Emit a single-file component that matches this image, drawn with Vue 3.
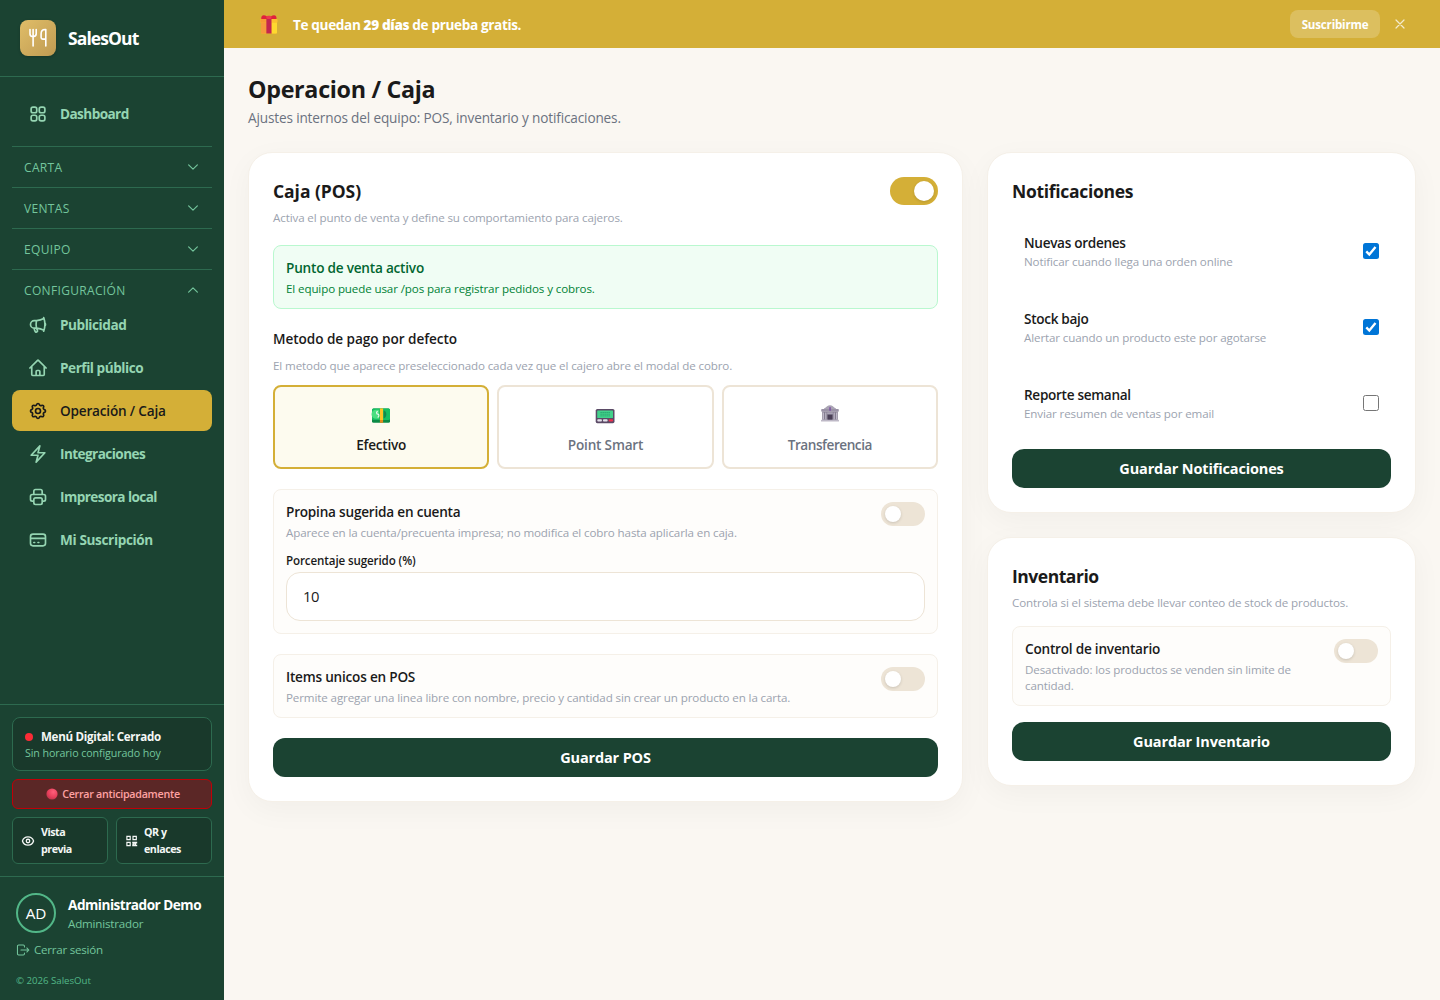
<script setup>
import { ref } from 'vue'

const groups = ['CARTA', 'VENTAS', 'EQUIPO']

const icons = {
  megaphone: 'M10.34 15.84c-.688-.06-1.386-.09-2.09-.09H7.5a4.5 4.5 0 1 1 0-9h.75c.704 0 1.402-.03 2.09-.09m0 9.18c.253.962.584 1.892.985 2.783.247.55.06 1.21-.463 1.511l-.657.38c-.551.318-1.26.117-1.527-.461a20.845 20.845 0 0 1-1.44-4.282m3.102.069a18.03 18.03 0 0 1-.59-4.59c0-1.586.205-3.124.59-4.59m0 9.18a23.848 23.848 0 0 1 8.835 2.535M10.34 6.66a23.847 23.847 0 0 0 8.835-2.535m0 0A23.74 23.74 0 0 0 18.795 3m.38 1.125a23.91 23.91 0 0 1 1.014 5.395m-1.014 8.855c-.118.38-.245.754-.38 1.125m.38-1.125a23.91 23.91 0 0 0 1.014-5.395m0-3.46c.495.413.811 1.035.811 1.73 0 .695-.316 1.317-.811 1.73m0-3.46a24.347 24.347 0 0 1 0 3.46',
  home: 'm2.25 12 8.954-8.955c.44-.439 1.152-.439 1.591 0L21.75 12M4.5 9.75v10.125c0 .621.504 1.125 1.125 1.125H9.75v-4.875c0-.621.504-1.125 1.125-1.125h2.25c.621 0 1.125.504 1.125 1.125V21h4.125c.621 0 1.125-.504 1.125-1.125V9.75M8.25 21h8.25',
  cog: 'M10.325 4.317c.426-1.756 2.924-1.756 3.35 0a1.724 1.724 0 002.573 1.066c1.543-.94 3.31.826 2.37 2.37a1.724 1.724 0 001.065 2.572c1.756.426 1.756 2.924 0 3.35a1.724 1.724 0 00-1.066 2.573c.94 1.543-.826 3.31-2.37 2.37a1.724 1.724 0 00-2.572 1.065c-.426 1.756-2.924 1.756-3.35 0a1.724 1.724 0 00-2.573-1.066c-1.543.94-3.31-.826-2.37-2.37a1.724 1.724 0 00-1.065-2.572c-1.756-.426-1.756-2.924 0-3.35a1.724 1.724 0 001.066-2.573c-.94-1.543.826-3.31 2.37-2.37.996.608 2.296.07 2.572-1.065zM15 12a3 3 0 11-6 0 3 3 0 016 0z',
  bolt: 'm3.75 13.5 10.5-11.25L12 10.5h8.25L9.75 21.75 12 13.5H3.75Z',
  printer: 'M17 17h2a2 2 0 002-2v-4a2 2 0 00-2-2H5a2 2 0 00-2 2v4a2 2 0 002 2h2m2 4h6a2 2 0 002-2v-4a2 2 0 00-2-2H9a2 2 0 00-2 2v4a2 2 0 002 2zm8-12V5a2 2 0 00-2-2H9a2 2 0 00-2 2v4h10z',
  card: 'M3 10h18M7 15h1m4 0h1m-7 4h12a3 3 0 003-3V8a3 3 0 00-3-3H6a3 3 0 00-3 3v8a3 3 0 003 3z',
}

const configItems = [
  { label: 'Publicidad', icon: 'megaphone', fit: 'n2' },
  { label: 'Perfil público', icon: 'home', fit: 'n2' },
  { label: 'Operación / Caja', icon: 'cog', active: true, fit: 'n3' },
  { label: 'Integraciones', icon: 'bolt', fit: 'n1' },
  { label: 'Impresora local', icon: 'printer', fit: 'n1' },
  { label: 'Mi Suscripción', icon: 'card', fit: 'n4' },
]

const method = ref('cash')

const notices = ref([
  { title: 'Nuevas ordenes', text: 'Notificar cuando llega una orden online', on: true },
  { title: 'Stock bajo', text: 'Alertar cuando un producto este por agotarse', on: true },
  { title: 'Reporte semanal', text: 'Enviar resumen de ventas por email', on: false },
])
</script>

<template>
  <div class="app">
    <aside class="side">
      <div class="brand">
        <div class="logo">
          <svg width="20" height="20" viewBox="0 0 20 20" fill="none" stroke="#fff" stroke-width="1.6" stroke-linecap="round" stroke-linejoin="round">
            <path d="M2 1.5v4.2c0 1.600 1 2.600 2.300 2.800h1.400C7 8.300 8.200 7.300 8.200 5.700V1.500M5.100 1.500V18M17.800 18V1.500h-.8c-2.400 0-3.900 1.800-3.900 4.400v3.600c0 1 .6 1.600 1.600 1.600h3.100" />
          </svg>
        </div>
        <span class="brand-name">SalesOut</span>
      </div>

      <nav class="nav">
        <a class="item">
          <svg class="ico" viewBox="0 0 24 24"><path d="M3.750 6A2.250 2.250 0 0 1 6 3.750h2.250A2.250 2.250 0 0 1 10.500 6v2.250a2.250 2.250 0 0 1-2.250 2.250H6a2.250 2.250 0 0 1-2.250-2.250V6ZM3.750 15.750A2.250 2.250 0 0 1 6 13.500h2.250a2.250 2.250 0 0 1 2.250 2.250V18a2.250 2.250 0 0 1-2.250 2.250H6A2.250 2.250 0 0 1 3.750 18v-2.250ZM13.500 6a2.250 2.250 0 0 1 2.250-2.250H18A2.250 2.250 0 0 1 20.250 6v2.250A2.250 2.250 0 0 1 18 10.500h-2.250a2.250 2.250 0 0 1-2.250-2.250V6ZM13.500 15.750a2.250 2.250 0 0 1 2.250-2.250H18a2.250 2.250 0 0 1 2.250 2.250V18A2.250 2.250 0 0 1 18 20.250h-2.250A2.250 2.250 0 0 1 13.500 18v-2.250Z" /></svg>
          <span class="n1">Dashboard</span>
        </a>
        <div class="groups">
          <div v-for="g in groups" :key="g" class="group closed">
            <div class="group-head">
              <span>{{ g }}</span>
              <svg class="chev" viewBox="0 0 24 24"><path d="m19.500 8.250-7.500 7.500-7.500-7.500" /></svg>
            </div>
          </div>
          <div class="group">
            <div class="group-head">
              <span>CONFIGURACIÓN</span>
              <svg class="chev" viewBox="0 0 24 24"><path d="m4.500 15.750 7.500-7.500 7.500 7.500" /></svg>
            </div>
            <div class="items">
              <a v-for="i in configItems" :key="i.label" class="item" :class="{ active: i.active }">
                <svg class="ico" viewBox="0 0 24 24"><path :d="icons[i.icon]" /></svg>
                <span :class="i.fit">{{ i.label }}</span>
              </a>
            </div>
          </div>
        </div>
      </nav>

      <div class="status">
        <div class="state-box">
          <div class="state-title"><i class="dot"></i><span>Menú Digital: Cerrado</span></div>
          <div class="state-sub">Sin horario configurado hoy</div>
        </div>
        <button class="early">
          <svg width="12" height="12" viewBox="0 0 12 12">
            <defs><radialGradient id="ball" cx=".62" cy=".32" r=".75"><stop offset="0" stop-color="#ff5f7a" /><stop offset=".6" stop-color="#e8405c" /><stop offset="1" stop-color="#b8354a" /></radialGradient></defs>
            <circle cx="6" cy="6" r="5.600" fill="url(#ball)" />
          </svg>
          <span>Cerrar anticipadamente</span>
        </button>
        <div class="quick">
          <button class="mini">
            <svg width="14" height="14" viewBox="0 0 24 24" fill="none" stroke="#f4f7f5" stroke-width="2.200" stroke-linecap="round" stroke-linejoin="round"><path d="M15 12a3 3 0 11-6 0 3 3 0 016 0z" /><path d="M2.458 12C3.732 7.943 7.523 5 12 5c4.478 0 8.268 2.943 9.542 7-1.274 4.057-5.064 7-9.542 7-4.477 0-8.268-2.943-9.542-7z" /></svg>
            <span>Vista<br />previa</span>
          </button>
          <button class="mini">
            <svg class="qr" width="12" height="12" viewBox="0 0 12 12" fill="none" stroke="#f4f7f5" stroke-width="1.200"><path d="M.9 1.300h3.300v3.300H.9zM7 1.300h3.300v3.300H7zM.9 7.300h3.300v3.300H.9z" /><path d="M6.200 7.300h2.600v1.900H6.200M9.500 6.800v4.400M10.600 6.800v1.800M6.200 10.600h2.800M10.600 9.800v1.500M7.300 7v4" /></svg>
            <span>QR y<br />enlaces</span>
          </button>
        </div>
      </div>

      <div class="account">
        <div class="who">
          <div class="avatar">AD</div>
          <div>
            <div class="who-name">Administrador Demo</div>
            <div class="who-role">Administrador</div>
          </div>
        </div>
        <div class="logout">
          <svg width="14" height="14" viewBox="0 0 24 24" fill="none" stroke="#74c69d" stroke-width="1.800" stroke-linecap="round" stroke-linejoin="round"><path d="M18.500 15.500l3.500-3.500m0 0l-3.500-3.500M22 12H8.500m6 5v1.500a2 2 0 01-2 2H4.500a2 2 0 01-2-2v-13a2 2 0 012-2h8a2 2 0 012 2V7" /></svg>
          <span>Cerrar sesión</span>
        </div>
        <div class="copy">© 2026 SalesOut</div>
      </div>
    </aside>

    <div class="page">
      <header class="banner">
        <svg class="gift" width="20" height="20" viewBox="0 0 20 20">
          <rect x="2" y="7.500" width="16" height="12" rx="1" fill="#fdbb2c" />
          <rect x="12.500" y="7.500" width="5.500" height="12" rx="1" fill="#ffd92f" />
          <rect x="2" y="7.500" width="5" height="12" rx="1" fill="#f59a3c" />
          <rect x="1.300" y="5" width="17.200" height="3.700" rx="1" fill="#fcc02e" />
          <rect x="1.300" y="5" width="6" height="3.700" rx="1" fill="#f49a34" />
          <path d="M2.300 4.900C2 3 3 1.300 4.800 1.300c2 0 3.800 1.200 5.100 3.600ZM17.500 4.900c.3-1.900-.7-3.600-2.500-3.600-2 0-3.800 1.200-5.100 3.600Z" fill="#e0213c" />
          <rect x="7.300" y="3.400" width="5.200" height="16.100" fill="#c3264f" />
          <rect x="7.300" y="1.800" width="5.200" height="3.200" rx="1.500" fill="#ee3a4c" />
        </svg>
        <div class="banner-text">Te quedan <b>29 días</b> de prueba gratis.</div>
        <button class="subscribe">Suscribirme</button>
        <svg class="close" width="16" height="16" viewBox="0 0 24 24" fill="none" stroke="#fff" stroke-opacity=".75" stroke-width="1.800" stroke-linecap="round"><path d="M6 6l12 12M18 6L6 18" /></svg>
      </header>

      <main class="main">
        <h1>Operacion / Caja</h1>
        <p class="lead">Ajustes internos del equipo: POS, inventario y notificaciones.</p>

        <div class="grid">
          <section class="card">
            <div class="head">
              <div>
                <h2 class="h-caja">Caja (POS)</h2>
                <p class="hint mt4">Activa el punto de venta y define su comportamiento para cajeros.</p>
              </div>
              <span class="toggle big on"><i></i></span>
            </div>

            <div class="alert">
              <div class="t14">Punto de venta activo</div>
              <p class="hint mt2 green">El equipo puede usar /pos para registrar pedidos y cobros.</p>
            </div>

            <div class="field-title">Metodo de pago por defecto</div>
            <p class="hint mt8">El metodo que aparece preseleccionado cada vez que el cajero abre el modal de cobro.</p>
            <div class="methods">
              <button class="method" :class="{ picked: method === 'cash' }" @click="method = 'cash'">
                <svg width="20" height="20" viewBox="0 -1 20 20">
                  <rect x="1" y="3.400" width="18" height="14.400" rx="1.500" fill="#0b8a45" />
                  <rect x="1" y="3.400" width="18" height="11.600" rx="1.500" fill="#14bf62" />
                  <path d="M5 4.800h3v9H5a4.500 4.500 0 0 1 0-9Z" fill="#4ade80" />
                  <path d="M6.800 6.300c-1.600 0-1.600 2.800 0 2.900s1.500 2.900-.2 2.900" stroke="#e9f7ee" stroke-width="1.200" fill="none" />
                  <path d="M12.500 5.500c3.800 0 3.800 7.800 0 7.800Z" fill="#158a4c" />
                  <rect x="8.900" y="3.400" width="3.200" height="11.600" fill="#fdc526" />
                  <rect x="8.900" y="15" width="3.200" height="2.800" fill="#e48a1e" />
                </svg>
                <span class="m1">Efectivo</span>
              </button>
              <button class="method" :class="{ picked: method === 'point' }" @click="method = 'point'">
                <svg width="20" height="20" viewBox="0 -1 20 20">
                  <rect x=".7" y="4" width="18.800" height="14.200" rx="1.600" fill="#5b4a66" />
                  <rect x="2.200" y="5.400" width="15.800" height="7.600" rx=".6" fill="#43d18b" />
                  <path d="M5.500 7.500h9.500M5.500 9.200h9.500M5.500 10.900h9.500" stroke="#1f9a66" stroke-width=".9" stroke-dasharray="1.200 .8" />
                  <rect x="2.300" y="14.300" width="4.600" height="2.300" rx=".8" fill="#e4dfe9" />
                  <rect x="8" y="14.300" width="4.600" height="2.300" rx=".8" fill="#e4dfe9" />
                  <rect x="13.700" y="14.300" width="4.300" height="2.300" rx=".8" fill="#f0304f" />
                </svg>
                <span>Point Smart</span>
              </button>
              <button class="method" :class="{ picked: method === 'bank' }" @click="method = 'bank'">
                <svg width="20" height="20" viewBox="0 0 20 20">
                  <path d="M4 4.600C6.500 3 7.800 1.200 10 1.200S13.500 3 16 4.600V6H4Z" fill="#aaa4b4" />
                  <rect x="1.200" y="5" width="17.600" height="2.800" rx=".8" fill="#9a93a6" />
                  <rect x="2.200" y="7.700" width="15.600" height="8.200" fill="#857e90" />
                  <path d="M3.400 8.500v7M5.800 8.500v7M14.200 8.500v7M16.600 8.500v7" stroke="#beb8c8" stroke-width="1.200" />
                  <rect x="7.600" y="10.700" width="4.800" height="5.200" fill="#4a3f56" />
                  <rect x="7.200" y="8.300" width="5.600" height="1.800" fill="#aaa3b5" />
                  <rect x="9.300" y="3" width="1.500" height="4" rx=".7" fill="#7b4fa3" />
                  <rect x="1" y="15.700" width="18" height="1.900" rx=".5" fill="#bdb8c6" />
                </svg>
                <span class="m3">Transferencia</span>
              </button>
            </div>

            <div class="option">
              <div class="option-row">
                <div>
                  <div class="t14">Propina sugerida en cuenta</div>
                  <p class="hint mt2">Aparece en la cuenta/precuenta impresa; no modifica el cobro hasta aplicarla en caja.</p>
                </div>
                <span class="toggle"><i></i></span>
              </div>
              <label class="label">Porcentaje sugerido (%)</label>
              <div class="input">10</div>
            </div>

            <div class="option">
              <div class="option-row">
                <div>
                  <div class="t14">Items unicos en POS</div>
                  <p class="hint mt2">Permite agregar una linea libre con nombre, precio y cantidad sin crear un producto en la carta.</p>
                </div>
                <span class="toggle"><i></i></span>
              </div>
            </div>

            <button class="save mt20">Guardar POS</button>
          </section>

          <div class="column">
            <section class="card">
              <h2 class="h-noti">Notificaciones</h2>
              <div class="notices">
                <label v-for="n in notices" :key="n.title" class="notice" @click="n.on = !n.on">
                  <div>
                    <div class="t14 tight">{{ n.title }}</div>
                    <p class="hint">{{ n.text }}</p>
                  </div>
                  <span class="check" :class="{ checked: n.on }">
                    <svg v-if="n.on" width="16" height="16" viewBox="0 0 16 16"><path d="M3.300 8.400 6.300 11.600 12.500 4" fill="none" stroke="#fff" stroke-width="2.300" /></svg>
                  </span>
                </label>
              </div>
              <button class="save">Guardar Notificaciones</button>
            </section>

            <section class="card">
              <h2 class="h-inv">Inventario</h2>
              <p class="hint mt4">Controla si el sistema debe llevar conteo de stock de productos.</p>
              <div class="option mt16">
                <div class="option-row">
                  <div>
                    <div class="t14">Control de inventario</div>
                    <p class="hint mt2">Desactivado: los productos se venden sin limite de cantidad.</p>
                  </div>
                  <span class="toggle"><i></i></span>
                </div>
              </div>
              <button class="save mt16">Guardar Inventario</button>
            </section>
          </div>
        </div>
      </main>
    </div>
  </div>
</template>

<style>
body {
  background: #faf7f2;
}
</style>

<style scoped>
* {
  box-sizing: border-box;
}
.app {
  display: flex;
  height: 1000px;
  overflow: hidden;
  font-family: 'Open Sans', 'Noto Sans', sans-serif;
  letter-spacing: -0.012em;
  color: #1a1a1a;
}
button {
  font: inherit;
  letter-spacing: inherit;
  border: 0;
  margin: 0;
  padding: 0;
}
h1, h2, p {
  margin: 0;
}

/* Sidebar */
.side {
  width: 224px;
  flex: none;
  display: flex;
  flex-direction: column;
  background: #1b4332;
  color: #95d5b2;
}
.brand {
  display: flex;
  align-items: center;
  gap: 12px;
  height: 77px;
  padding: 0 20px;
  border-bottom: 1px solid #2d6a4f;
}
.logo {
  display: flex;
  align-items: center;
  justify-content: center;
  width: 36px;
  height: 36px;
  border-radius: 8px;
  background: linear-gradient(135deg, #e0bd68, #bf9b52);
  box-shadow: 0 1px 3px rgba(0, 0, 0, 0.2);
}
.brand-name {
  color: #fff;
  font-size: 17.5px;
  font-weight: 700;
  letter-spacing: -0.052em;
}
.nav {
  flex: 1;
  padding: 16px 12px 0;
}
.item {
  display: flex;
  align-items: center;
  gap: 12px;
  height: 41px;
  padding: 0 16px;
  border-radius: 8px;
  font-size: 13.6px;
  font-weight: 700;
}
.item.active {
  background: #d4af37;
  color: #1a1a1a;
  font-weight: 600;
}
.n1 { letter-spacing: -0.043em; }
.n2 { letter-spacing: -0.034em; }
.n3 { letter-spacing: -0.014em; }
.n4 { letter-spacing: -0.027em; }
.ico {
  width: 20px;
  height: 20px;
  fill: none;
  stroke: currentColor;
  stroke-width: 2;
  stroke-linecap: round;
  stroke-linejoin: round;
}
.groups {
  margin-top: 12px;
}
.group {
  border-top: 1px solid #2d6a4f;
}
.group.closed {
  padding-bottom: 6px;
}
.group-head {
  display: flex;
  align-items: center;
  justify-content: space-between;
  padding: 12px 12px 6px;
  height: 34px;
  font-size: 12px;
  line-height: 16px;
  letter-spacing: 0.028em;
  color: #74c69d;
}
.group-head span {
  padding-top: 1px;
}
.chev {
  width: 14px;
  height: 14px;
  fill: none;
  stroke: #74c69d;
  stroke-width: 2;
  stroke-linecap: round;
  stroke-linejoin: round;
}
.items {
  display: flex;
  flex-direction: column;
  gap: 2px;
}
.status {
  border-top: 1px solid #2d6a4f;
  padding: 12px;
  display: flex;
  flex-direction: column;
  gap: 8px;
}
.state-box {
  height: 54px;
  padding: 10px 12px;
  border: 1px solid #2d6a4f;
  border-radius: 8px;
  background: #19392b;
}
.state-title {
  display: flex;
  align-items: center;
  gap: 8px;
  font-size: 11.6px;
  line-height: 17px;
  font-weight: 700;
  letter-spacing: -0.027em;
  color: #f4f7f5;
}
.dot {
  width: 8px;
  height: 8px;
  border-radius: 4px;
  background: #fb2c36;
}
.state-sub {
  font-size: 10.7px;
  line-height: 16px;
  letter-spacing: -0.01em;
  color: #74c69d;
}
.early {
  display: flex;
  align-items: center;
  justify-content: center;
  gap: 4px;
  height: 30px;
  padding-left: 2px;
  border: 1px solid #c10007;
  border-radius: 6px;
  background: #5b2726;
  color: #ffa2a2;
  font-size: 10.7px;
  font-weight: 600;
  letter-spacing: -0.025em;
}
.quick {
  display: grid;
  grid-template-columns: 1fr 1fr;
  gap: 8px;
}
.mini {
  display: flex;
  align-items: center;
  gap: 6px;
  height: 47px;
  padding: 0 8px;
  border: 1px solid #2d6a4f;
  border-radius: 6px;
  background: #19392b;
  color: #f4f7f5;
  text-align: left;
  font-size: 10.7px;
  line-height: 16.5px;
  font-weight: 700;
  letter-spacing: -0.045em;
}
.qr {
  margin-left: 1px;
}
.account {
  border-top: 1px solid #2d6a4f;
  padding: 16px 16px 12px;
}
.who {
  display: flex;
  align-items: center;
  gap: 12px;
}
.avatar {
  display: flex;
  align-items: center;
  justify-content: center;
  width: 40px;
  height: 40px;
  border: 2px solid #52b788;
  border-radius: 50%;
  color: #fff;
  font-size: 15.3px;
}
.who-name {
  font-size: 13.6px;
  line-height: 20px;
  font-weight: 700;
  letter-spacing: -0.037em;
  color: #fff;
}
.who-role {
  font-size: 11.6px;
  line-height: 17px;
  color: #74c69d;
}
.logout {
  display: flex;
  align-items: center;
  gap: 4px;
  margin-top: 8px;
  font-size: 11.6px;
  line-height: 18px;
  letter-spacing: -0.021em;
  color: #74c69d;
}
.copy {
  margin-top: 14px;
  font-size: 9.7px;
  line-height: 15px;
  letter-spacing: -0.003em;
  color: #52b788;
}

/* Banner */
.page {
  flex: 1;
  min-width: 0;
}
.banner {
  display: flex;
  align-items: center;
  height: 48px;
  padding: 0 32px 0 34.5px;
  background: #d4af37;
  color: #fff;
}
.banner-text {
  flex: 1;
  margin-left: 14.5px;
  font-size: 13.6px;
  font-weight: 700;
  letter-spacing: -0.027em;
}
.subscribe {
  width: 90px;
  height: 28px;
  border-radius: 8px;
  background: rgba(255, 255, 255, 0.2);
  color: #fff;
  font-size: 11.6px;
  font-weight: 700;
  letter-spacing: -0.018em;
}
.close {
  margin-left: 12px;
}

/* Content */
.main {
  padding: 24px;
}
h1 {
  margin-top: -1px;
  padding-bottom: 1px;
  font-size: 23.3px;
  line-height: 36px;
  font-weight: 700;
  letter-spacing: -0.0135em;
}
.lead {
  font-size: 13.6px;
  line-height: 20px;
  letter-spacing: -0.011em;
  color: #6b7280;
}
.grid {
  display: grid;
  grid-template-columns: 5fr 3fr;
  gap: 24px;
  align-items: start;
  margin-top: 24px;
}
.column {
  display: flex;
  flex-direction: column;
  gap: 24px;
}
.card {
  padding: 24px;
  border: 1px solid #f5f0e8;
  border-radius: 24px;
  background: #fff;
  box-shadow: 0 8px 30px rgba(26, 26, 26, 0.04);
}
h2 {
  font-size: 17.5px;
  line-height: 28px;
  font-weight: 700;
}
.h-caja { letter-spacing: -0.003em; }
.h-noti { letter-spacing: -0.017em; }
.h-inv { letter-spacing: -0.027em; }
.hint {
  padding-top: 1px;
  margin-bottom: -1px;
  font-size: 11.6px;
  line-height: 16px;
  letter-spacing: -0.0105em;
  color: #9ca3af;
}
.hint.green { color: #008236; }
.mt2 { margin-top: 2px; }
.mt4 { margin-top: 4px; }
.mt8 { margin-top: 8px; }
.head {
  display: flex;
  justify-content: space-between;
}
.toggle {
  flex: none;
  width: 44px;
  height: 24px;
  padding: 4px;
  border-radius: 12px;
  background: #ede4d6;
}
.toggle i {
  display: block;
  width: 16px;
  height: 16px;
  border-radius: 50%;
  background: #fff;
  box-shadow: 0 1px 3px rgba(0, 0, 0, 0.15);
}
.toggle.big {
  width: 48px;
  height: 28px;
  border-radius: 14px;
}
.toggle.big i {
  width: 20px;
  height: 20px;
}
.toggle.on {
  background: #d4af37;
}
.toggle.on i {
  margin-left: auto;
}
.alert {
  height: 64px;
  margin-top: 20px;
  padding: 12px;
  border: 1px solid #b9f8cf;
  border-radius: 8px;
  background: #f0fdf4;
  color: #016630;
}
.t14 {
  font-size: 13.6px;
  line-height: 20px;
  font-weight: 600;
  letter-spacing: -0.016em;
}
.t14.tight {
  letter-spacing: -0.023em;
}
.field-title {
  margin-top: 20px;
  font-size: 13.6px;
  line-height: 20px;
  font-weight: 600;
  letter-spacing: -0.004em;
}
.methods {
  display: grid;
  grid-template-columns: repeat(3, 1fr);
  gap: 8px;
  margin-top: 12px;
}
.method {
  display: flex;
  flex-direction: column;
  align-items: center;
  height: 84px;
  padding-top: 17px;
  border: 2px solid #ede4d6;
  border-radius: 8px;
  background: #fff;
  color: #6b7280;
  font-size: 13.6px;
  line-height: 20px;
  font-weight: 600;
}
.method span {
  margin-top: 11px;
}
.method.picked {
  border-color: #d4af37;
  background: #fdfbef;
  color: #1a1a1a;
}
.m1 { letter-spacing: -0.016em; }
.m3 { letter-spacing: -0.034em; }
.option {
  margin-top: 20px;
  padding: 12px;
  border: 1px solid #f5f0e8;
  border-radius: 8px;
  background: #fefdfb;
}
.option.mt16 { margin-top: 16px; }
.option-row {
  display: flex;
  justify-content: space-between;
  gap: 16px;
}
.label {
  display: block;
  margin-top: 12px;
  padding-top: 1px;
  font-size: 11.6px;
  line-height: 16px;
  font-weight: 600;
  letter-spacing: -0.01em;
}
.input {
  margin-top: 3px;
  height: 49px;
  padding: 12px 16px;
  border: 1px solid #ede4d6;
  border-radius: 14px;
  background: #fff;
  font-size: 14.8px;
  line-height: 22px;
  letter-spacing: -0.03em;
}
.save {
  display: block;
  width: 100%;
  height: 39px;
  padding-top: 1px;
  border-radius: 12px;
  background: #1b4332;
  color: #fff;
  font-size: 14.5px;
  line-height: 22px;
  font-weight: 700;
  letter-spacing: -0.01em;
}
.mt16 { margin-top: 16px; }
.mt20 { margin-top: 20px; }
.notices {
  display: flex;
  flex-direction: column;
  gap: 16px;
  margin: 16px 0;
}
.notice {
  display: flex;
  align-items: center;
  justify-content: space-between;
  height: 60px;
  padding: 0 12px;
}
.check {
  width: 16px;
  height: 16px;
  border: 1px solid #767676;
  border-radius: 2.5px;
  background: #fff;
}
.check.checked {
  border: 0;
  background: #0075d7;
}
.check svg {
  display: block;
}
</style>
